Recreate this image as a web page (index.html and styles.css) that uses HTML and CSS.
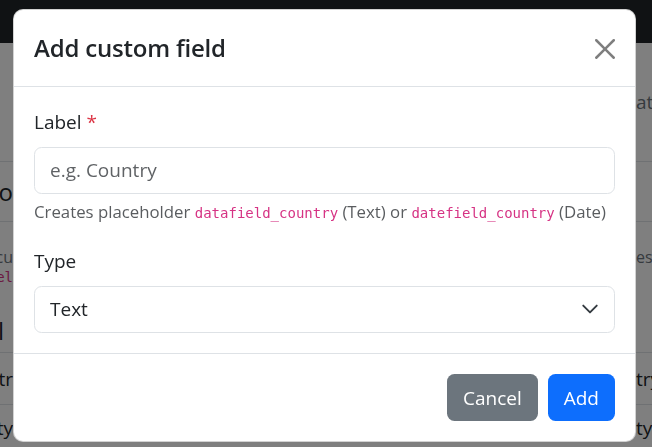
FILE: index.html
```html
<!DOCTYPE html>
<html lang="en">
<head>
<meta charset="utf-8">
<title>Add custom field</title>
<link rel="stylesheet" href="styles.css">
</head>
<body>
<div class="page">
  <div class="navbar"></div>
  <div class="bg-row row-a"><div class="cell-l"></div><div></div><div class="cell-r muted">attributes</div></div>
  <div class="bg-row row-b"><div class="cell-l heading">Co</div><div></div><div class="cell-r"></div></div>
  <div class="bg-row row-c">
    <div class="cell-l stack">
      <span class="muted small">Add cu</span>
      <code class="bg-code">fiel</code>
      <span class="heading short">Label</span>
    </div>
    <div></div>
    <div class="cell-r stack"><span class="muted small">es for templates</span></div>
  </div>
  <div class="bg-row row-d"><div class="cell-l">Countr</div><div></div><div class="cell-r">try</div></div>
  <div class="bg-row row-e"><div class="cell-l">Cty</div><div></div><div class="cell-r">ty</div></div>
</div>

<div class="backdrop"></div>

<div class="modal">
  <div class="dialog">
    <div class="content">
      <div class="header">
        <h5 class="title">Add custom field</h5>
        <button class="close" type="button" aria-label="Close">
          <svg viewBox="0 0 16 16" width="20" height="20"><path d="M.293.293a1 1 0 0 1 1.414 0L8 6.586 14.293.293a1 1 0 1 1 1.414 1.414L9.414 8l6.293 6.293a1 1 0 0 1-1.414 1.414L8 9.414l-6.293 6.293a1 1 0 0 1-1.414-1.414L6.586 8 .293 1.707a1 1 0 0 1 0-1.414"/></svg>
        </button>
      </div>
      <div class="body">
        <div class="group">
          <label class="label">Label <span class="req">*</span></label>
          <input class="control" type="text" placeholder="e.g. Country">
          <div class="help">Creates placeholder <code>datafield_country</code> (Text) or <code>datefield_country</code> (Date)</div>
        </div>
        <div class="group last">
          <label class="label">Type</label>
          <div class="control select">
            <span>Text</span>
            <svg class="chev" viewBox="0 0 16 16" width="18" height="18"><path fill="none" stroke="#343a40" stroke-linecap="round" stroke-linejoin="round" stroke-width="1.7" d="m2 5 6 6 6-6"/></svg>
          </div>
        </div>
      </div>
      <div class="footer">
        <button class="btn btn-secondary" type="button">Cancel</button>
        <button class="btn btn-primary" type="button">Add</button>
      </div>
    </div>
  </div>
</div>
</body>
</html>
```
FILE: styles.css
```css
html, body {
  margin: 0;
  padding: 0;
  overflow: hidden;
  width: 652px;
  height: 447px;
}
body {
  background: #fff;
  font-family: "Open Sans", "Noto Sans", sans-serif;
  font-size: 19px;
  color: #212529;
}

/* background page */
.navbar {
  height: 43px;
  background: #212529;
}
.bg-row {
  display: grid;
  grid-template-columns: 213px 623px 216px;
  margin: 0 -200px;
  border-bottom: 1px solid #dee2e6;
  align-items: center;
  white-space: nowrap;
}
.cell-l {
  text-align: right;
  overflow: hidden;
}
.cell-r {
  text-align: left;
}
.row-a { height: 118px; }
.row-b { height: 59px; }
.row-c { height: 130px; align-items: start; }
.row-d { height: 51px; }
.row-e { height: 46px; border-bottom: 0; }
.heading {
  font-size: 24px;
  font-weight: 500;
}
.muted { color: #6c757d; }
.small { font-size: 16px; }
.stack {
  display: flex;
  flex-direction: column;
  align-items: flex-end;
  padding-top: 25px;
  line-height: 20px;
}
.cell-r.stack { align-items: flex-start; }
.bg-code {
  font-family: "DejaVu Sans Mono", monospace;
  font-size: 14px;
  color: #d63384;
  line-height: 20px;
}
.short {
  margin-top: 34px;
  padding-right: 9px;
}

/* overlay */
.backdrop {
  position: fixed;
  inset: 0;
  background: rgba(0, 0, 0, .5);
}
.modal {
  position: fixed;
  inset: 0;
  overflow: hidden;
}
.dialog {
  width: 623px;
  margin: 9px 0 0 13px;
}
.content {
  background: #fff;
  border: 1px solid rgba(0, 0, 0, .175);
  border-radius: 10px;
  box-sizing: border-box;
}
.header {
  display: flex;
  align-items: center;
  justify-content: space-between;
  padding: 20px;
  border-bottom: 1px solid #dee2e6;
}
.title {
  margin: 0;
  font-size: 24px;
  letter-spacing: -0.2px;
  font-weight: 600;
  line-height: 36px;
  color: #212529;
}
.close {
  width: 20px;
  height: 20px;
  padding: 0;
  margin-top: 2px;
  border: 0;
  background: transparent;
  opacity: .5;
  display: flex;
}
.body {
  padding: 20px;
}
.group {
  margin-bottom: 20px;
}
.group.last { margin-bottom: 0; }
.label {
  display: block;
  line-height: 30px;
  margin-bottom: 10px;
}
.req { color: #dc3545; }
.control {
  display: block;
  box-sizing: border-box;
  width: 100%;
  height: 47px;
  padding: 7px 15px 8px;
  font-family: inherit;
  font-size: 19px;
  line-height: 30px;
  color: #212529;
  background: #fff;
  border: 1px solid #dee2e6;
  border-radius: 7.5px;
  outline: none;
}
.control::placeholder {
  color: rgba(33, 37, 41, .72);
}
.select {
  display: flex;
  align-items: center;
  justify-content: space-between;
}
.chev {
  margin-right: 0;
}
.help {
  margin-top: 5px;
  font-size: 16.8px;
  line-height: 26px;
  color: rgba(33, 37, 41, .75);
}
.help code {
  font-family: "DejaVu Sans Mono", monospace;
  font-size: 14px;
  color: #d63384;
}
.footer {
  display: flex;
  justify-content: flex-end;
  gap: 10px;
  padding: 20px;
  border-top: 1px solid #dee2e6;
}
.btn {
  height: 47px;
  padding: 0 15px;
  font-family: inherit;
  font-size: 19px;
  line-height: 30px;
  color: #fff;
  border: 1px solid transparent;
  border-radius: 7.5px;
}
.btn-secondary { background: #6c757d; }
.btn-primary { background: #0d6efd; }
```
